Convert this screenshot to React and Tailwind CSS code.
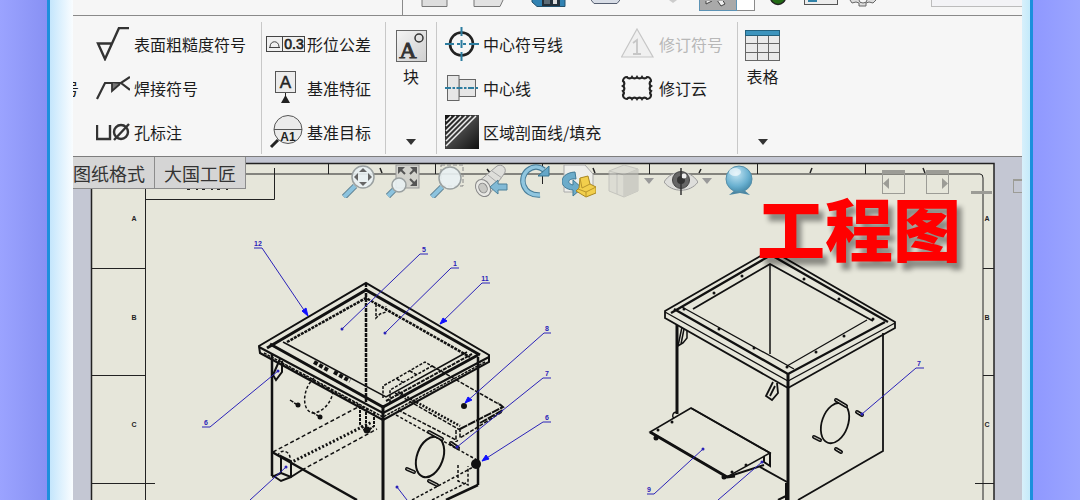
import clsx from "clsx";

const INK = "#111111";
const BALLOON = "#2a22b8";

/* ---------- ribbon icons ---------- */

const RoughnessIcon = () => (
  <svg width="34" height="34" viewBox="0 0 34 34" fill="none" stroke="#333" strokeWidth="2.4">
    <path d="M33 1H23L9 32L2 16.500H16" />
  </svg>
);

const WeldIcon = () => (
  <svg width="34" height="34" viewBox="0 0 34 34" fill="none" stroke="#333" strokeWidth="2.2">
    <path d="M1 28L9 12H25L34 6M25 12L34 19" />
    <path d="M16 12V20L24 13" fill="#777" strokeWidth="1.800" />
  </svg>
);

const HoleIcon = () => (
  <svg width="34" height="34" viewBox="0 0 34 34" fill="none" stroke="#333" strokeWidth="2.400">
    <path d="M1 10V24H14V10" />
    <circle cx="25" cy="17" r="7" />
    <path d="M18 25L33 9" />
  </svg>
);

const ToleranceIcon = () => (
  <svg width="39" height="34" viewBox="0 0 39 34" fill="none" stroke="#444">
    <rect x="0.500" y="9.500" width="38" height="15" fill="#f0f0f0" />
    <path d="M16.500 9V25M3 20.500H14M4 20C4 13 13 13 13 20" />
    <text x="28" y="22" fontSize="14" fontFamily="Liberation Sans, sans-serif" fill="#222" stroke="#222" strokeWidth="0.600" textAnchor="middle">
      0.3
    </text>
  </svg>
);

const DatumIcon = () => (
  <svg width="39" height="34" viewBox="0 0 39 34" fill="none" stroke="#555">
    <rect x="9.500" y="0.500" width="20" height="21" fill="#ececec" />
    <path d="M19.500 22V27" stroke="#222" />
    <path d="M19.500 24L24 32H15Z" fill="#222" stroke="none" />
    <text x="19.500" y="17" fontSize="17" fontFamily="Liberation Sans, sans-serif" fill="#222" stroke="#222" strokeWidth="0.500" textAnchor="middle">
      A
    </text>
  </svg>
);

const DatumTargetIcon = () => (
  <svg width="39" height="34" viewBox="0 0 39 34" fill="none" stroke="#555">
    <circle cx="22" cy="14.500" r="14" fill="#ebebeb" />
    <path d="M8 14.500H36" />
    <path d="M12 25L5 32" stroke="#222" strokeWidth="3" />
    <text x="22" y="26" fontSize="12" fontWeight="700" fontFamily="Liberation Sans, sans-serif" fill="#222" stroke="none" textAnchor="middle">
      A1
    </text>
  </svg>
);

const BlockIcon = () => (
  <svg width="31" height="32" viewBox="0 0 31 32" fill="none">
    <defs>
      <linearGradient id="block" x1="0" y1="0" x2="1" y2="1">
        <stop offset="0" stopColor="#f4f4f4" />
        <stop offset="1" stopColor="#cfcfcf" />
      </linearGradient>
    </defs>
    <rect x="0.500" y="0.500" width="30" height="31" fill="url(#block)" stroke="#666" />
    <circle cx="23" cy="8" r="4" stroke="#333" strokeWidth="1.500" />
    <text x="12" y="28" fontSize="24" fontFamily="Liberation Serif, serif" fill="#333" stroke="#333" textAnchor="middle">
      A
    </text>
  </svg>
);

const CenterMarkIcon = () => (
  <svg width="34" height="34" viewBox="0 0 34 34" fill="none">
    <circle cx="16.500" cy="17" r="11.500" stroke="#222" strokeWidth="2.600" />
    <path d="M0 17H9M12 17H15M18 17H21M24 17H34M16.500 0V9M16.500 13V21M16.500 25V34" stroke="#2d7da0" strokeWidth="2" />
  </svg>
);

const CenterlineIcon = () => (
  <svg width="34" height="34" viewBox="0 0 34 34" fill="#e6e6e6" stroke="#666">
    <rect x="14" y="8.500" width="16.500" height="17" />
    <rect x="2.500" y="4.500" width="11.500" height="25" />
    <path d="M0 17H34" stroke="#2d7da0" strokeWidth="2.200" strokeDasharray="6 1.500 2.500 1.500" />
  </svg>
);

const HatchIcon = () => (
  <svg width="34" height="34" viewBox="0 0 34 34" fill="none">
    <defs>
      <linearGradient id="hatch" x1="0" y1="0" x2="1" y2="1">
        <stop offset="0" stopColor="#111" />
        <stop offset="0.500" stopColor="#444" />
        <stop offset="1" stopColor="#111" />
      </linearGradient>
    </defs>
    <rect width="34" height="34" fill="url(#hatch)" />
    <path d="M1 6L6 1M1 11L11 1M1 16L16 1M1 21L21 1M1 26L26 1M1 31L31 1" stroke="#eee" strokeWidth="1.500" />
  </svg>
);

const RevisionIcon = () => (
  <svg width="34" height="34" viewBox="0 0 34 34" fill="#f0f0f0" stroke="#c6c6c6" strokeWidth="1.200">
    <path d="M16 2L32 30H0.500Z" />
    <path d="M12 16L16 13V27M12 27H20" fill="none" strokeWidth="1.800" />
  </svg>
);

const CloudIcon = () => (
  <svg width="34" height="34" viewBox="0 0 34 34" fill="none" stroke="#222" strokeWidth="2.200">
    <path d="M2 10A4 4 0 0 1 6 6A3 3 0 0 0 11 6A3 3 0 0 0 16 6A3 3 0 0 0 21 6A3 3 0 0 0 26 6A4 4 0 0 1 30 10A3 3 0 0 0 30 15A3 3 0 0 0 30 20A3 3 0 0 0 30 24A4 4 0 0 1 26 28A3 3 0 0 0 21 28A3 3 0 0 0 16 28A3 3 0 0 0 11 28A3 3 0 0 0 6 28A4 4 0 0 1 2 24A3 3 0 0 0 2 20A3 3 0 0 0 2 15A3 3 0 0 0 2 10Z" />
  </svg>
);

const TableIcon = () => (
  <svg width="35" height="32" viewBox="0 0 35 32" fill="#eaeaea" stroke="#666">
    <rect x="0.500" y="0.500" width="34" height="30" />
    <path d="M0 13.500H35M0 22.500H35M12.500 5V31M23.500 5V31" />
    <rect x="0.500" y="0.500" width="34" height="5" fill="#3d94bd" stroke="#24617d" />
  </svg>
);

const Caret = ({ className }) => (
  <svg width="10" height="6" viewBox="0 0 10 6" fill="currentColor" className={className}>
    <path d="M0 0H10L5 6Z" />
  </svg>
);

/* ---------- title strip ---------- */

function TitleStrip() {
  return (
    <div className="flex h-4 items-start overflow-hidden border-b border-[#8a8a8a]">
      <div className="h-full w-[330px] shrink-0 border-r border-[#8a8a8a]" />
      <div className="ml-[18px] flex items-start gap-[25px]">
        <button aria-label="新建">
          <svg width="27" height="8" viewBox="0 0 27 8">
            <path d="M1 -2V6.500H26V-2" fill="#ddd" stroke="#777" />
          </svg>
        </button>
        <button aria-label="打开">
          <svg width="31" height="8" viewBox="0 0 31 8">
            <path d="M1 -2V6.500H27L31 -2" fill="#e2e2e2" stroke="#777" />
          </svg>
        </button>
        <button aria-label="保存">
          <svg width="37" height="8" viewBox="0 0 37 8">
            <path d="M3 -1V2L8 6.500H36V-1Z" fill="#3182b2" stroke="#24526e" />
            <rect x="13" y="0" width="18" height="6" fill="#24303a" />
            <rect x="15" y="0" width="6" height="4" fill="#5d6b75" />
            <rect x="24" y="0" width="4" height="4" fill="#ddd" />
          </svg>
        </button>
        <button aria-label="打印">
          <svg width="29" height="5" viewBox="0 0 29 5">
            <path d="M0 0L3 3.500H26L29 0" fill="#d8dde6" stroke="#555e70" />
          </svg>
        </button>
      </div>
      <button aria-label="撤销" className="ml-[45px]">
        <svg width="16" height="4" viewBox="0 0 16 4">
          <path d="M4 0H12L8 3Z" fill="#ccc" />
        </svg>
      </button>
      <button aria-label="选择" className="ml-[18px] h-[11px] w-[38px] border-x border-b border-[#5d93b5] bg-[#a9a9a9]">
        <svg width="36" height="9" viewBox="0 0 36 9" fill="#eee" stroke="#444">
          <path d="M6 -2V3L12 0M17 -1L21 5L25 3L22 -2" />
        </svg>
      </button>
      <button aria-label="选择选项" className="h-[11px] w-[18px] border-r border-b border-[#8a8a8a] bg-white" />
      <button aria-label="重建模型" className="ml-[14px]">
        <svg width="18" height="6" viewBox="0 0 18 6">
          <circle cx="9" cy="-3" r="7.500" fill="#236b16" stroke="#222" strokeWidth="1.500" />
        </svg>
      </button>
      <button aria-label="文件属性" className="ml-[17px]">
        <svg width="34" height="6" viewBox="0 0 34 6">
          <rect x="0.500" y="-3" width="33" height="7.500" fill="#ececec" stroke="#555" />
          <rect x="4" y="-3" width="9" height="5" fill="#3182a8" />
        </svg>
      </button>
      <button aria-label="选项" className="ml-[11px]">
        <svg width="28" height="8" viewBox="0 0 28 8">
          <path d="M1 0L3 3L7 2L10 3V6H17V3L20 2L24 3L27 0" fill="#ddd" stroke="#666" />
          <path d="M10 0A4 3 0 0 0 18 0" fill="#f6f6f6" stroke="#666" />
        </svg>
      </button>
      <input aria-label="搜索命令" className="ml-[54px] h-[7px] min-w-0 flex-1 border-b border-l border-[#bcbcbc] bg-[#f3f3f6] outline-none" />
    </div>
  );
}

/* ---------- ribbon ---------- */

function Command({ icon, label, disabled, wide }) {
  return (
    <button
      disabled={disabled}
      className={clsx(
        "flex h-11 items-center text-left text-[16px] leading-6 whitespace-nowrap",
        wide ? "gap-[2px]" : "gap-1",
        disabled ? "text-[#b8b8b8]" : "text-[#1c1c1c]"
      )}
    >
      {icon}
      <span>{label}</span>
    </button>
  );
}

function BigCommand({ icon, label }) {
  return (
    <button className="flex h-33 flex-col items-center pt-2 text-[16px] leading-6 text-[#1c1c1c]">
      {icon}
      <span className="mt-[2px]">{label}</span>
      <Caret className="mt-auto mb-[9px] text-[#333]" />
    </button>
  );
}

function Ribbon() {
  return (
    <div className="flex border-b border-[#7d7d7d] pt-[6px] pb-[2px]">
      <div className="flex w-[189px] shrink-0 border-r border-[#c8c8c8]">
        <div className="flex w-[6px] items-center justify-end overflow-hidden text-[16px] leading-6 text-[#1c1c1c]">
          <span>号</span>
        </div>
        <div className="ml-[17px]">
          <Command icon={<RoughnessIcon />} label="表面粗糙度符号" />
          <Command icon={<WeldIcon />} label="焊接符号" />
          <Command icon={<HoleIcon />} label="孔标注" />
        </div>
      </div>
      <div className="w-[124px] shrink-0 border-r border-[#c8c8c8] pl-1">
        <Command wide icon={<ToleranceIcon />} label="形位公差" />
        <Command wide icon={<DatumIcon />} label="基准特征" />
        <Command wide icon={<DatumTargetIcon />} label="基准目标" />
      </div>
      <div className="flex w-[51px] shrink-0 justify-center border-r border-[#c8c8c8]">
        <BigCommand icon={<BlockIcon />} label="块" />
      </div>
      <div className="grid w-[301px] shrink-0 grid-cols-[176px_1fr] content-start border-r border-[#c8c8c8] pl-2">
        <Command icon={<CenterMarkIcon />} label="中心符号线" />
        <Command icon={<RevisionIcon />} label="修订符号" disabled />
        <Command icon={<CenterlineIcon />} label="中心线" />
        <Command icon={<CloudIcon />} label="修订云" />
        <Command icon={<HatchIcon />} label="区域剖面线/填充" />
      </div>
      <div className="pl-[7px]">
        <BigCommand icon={<TableIcon />} label="表格" />
      </div>
    </div>
  );
}

/* ---------- heads-up view toolbar ---------- */

const Lens = ({ cx, cy, r, tail }) => (
  <>
    <path d={tail} stroke="#5d7f90" strokeWidth="6" />
    <path d={tail} stroke="#8cc3de" strokeWidth="4" />
    <circle cx={cx} cy={cy} r={r} fill="#e9f1f3" fillOpacity="0.9" stroke="#9aa0a0" strokeWidth="1.500" />
  </>
);

const viewTools = [
  {
    label: "平移缩放",
    art: (
      <>
        <Lens cx={21} cy={13} r={11} tail="M13 22L2 33" />
        <path d="M21 4L25 8H17ZM21 22L25 18H17ZM12 13L16 9V17ZM30 13L26 9V17Z" fill="#666" />
      </>
    ),
  },
  {
    label: "整屏显示全图",
    art: (
      <>
        <rect x="10" y="1" width="23" height="23" fill="#d2d2cc" stroke="#999" />
        <path d="M12 3H19L12 10ZM31 3V10L24 3ZM31 22V15L24 22Z" fill="#555" />
        <path d="M15 6L19 10M28 6L24 10M28 19L24 15" stroke="#555" strokeWidth="2" />
        <Lens cx={13} cy={21} r={7} tail="M9 25L2 32" />
      </>
    ),
  },
  {
    label: "局部放大",
    art: (
      <>
        <rect x="11" y="1" width="22" height="21" stroke="#888" strokeDasharray="4 2" />
        <Lens cx={20} cy={14} r={11} tail="M12 23L2 33" />
      </>
    ),
  },
  {
    label: "上一视图",
    art: (
      <>
        <path d="M4 18L23 2C28 -1 34 5 30 10L14 32Z" fill="#dededa" stroke="#999" />
        <path d="M18 7L28 14M14 11L24 19" stroke="#aaa" />
        <ellipse cx="9" cy="24" rx="7" ry="9" transform="rotate(-30 9 24)" fill="#e8e8e4" stroke="#888" />
        <ellipse cx="9" cy="24" rx="4" ry="5" transform="rotate(-30 9 24)" fill="#c8c8c4" stroke="#888" />
        <path d="M16 23L24 16V20H33V26H24V30Z" fill="#82bad6" stroke="#4d8099" />
      </>
    ),
  },
  {
    label: "旋转视图",
    art: (
      <>
        <path d="M22 31C5 32 0 14 10 6C15 2 21 2 26 6" stroke="#477c98" strokeWidth="5.500" />
        <path d="M22 31C5 32 0 14 10 6C15 2 21 2 26 6" stroke="#90c6df" strokeWidth="3.500" />
        <path d="M31 2V12H20Z" fill="#65a7c8" stroke="#397590" />
      </>
    ),
  },
  {
    label: "3D 工程图视图",
    art: (
      <>
        <path d="M2 1H23L31 10V28H2Z" fill="#eeeeea" stroke="#aaa" />
        <path d="M13 8C-4 9 -4 25 11 26V32L20 24L11 16V21C5 20 5 14 14 15Z" fill="#6cacca" stroke="#417a96" />
        <path d="M18 14L26 12L28 20L34 23V29L24 33L14 27L17 24Z" fill="#f2cf4c" stroke="#a98721" />
        <path d="M18 14L20 24L28 20M16 25L24 28L34 23M24 28V33" stroke="#b8952b" />
      </>
    ),
  },
  {
    label: "显示样式",
    caret: true,
    art: (
      <g opacity="0.600">
        <path d="M3 7L18 1L32 5V27L18 33L3 27Z" fill="#d6d6d0" stroke="#b0b0ac" />
        <path d="M3 7L18 11L32 5M18 11V33M11 9V30" stroke="#b0b0ac" />
        <path d="M18 11L32 5V27L18 33Z" fill="#bdbdb8" />
      </g>
    ),
  },
  {
    label: "隐藏/显示项目",
    caret: true,
    art: (
      <>
        <path d="M0 18C8 5 26 5 34 18C26 29 8 29 0 18Z" fill="#dededb" stroke="#999" />
        <circle cx="17" cy="16" r="8.500" fill="#666" stroke="#444" />
        <circle cx="17" cy="16" r="4" fill="#333" />
        <circle cx="20" cy="12" r="2.500" fill="#eee" />
        <path d="M17 4V31" stroke="#333" strokeWidth="1.500" />
      </>
    ),
  },
  {
    label: "应用布景",
    art: (
      <>
        <path d="M7 31L13 26H22L28 31L18 29Z" fill="#4c87a3" />
        <circle cx="17" cy="15" r="13" fill="url(#ball)" stroke="#568fa9" />
        <ellipse cx="13" cy="8" rx="6" ry="4" fill="#fff" opacity="0.600" />
      </>
    ),
  },
];

function ViewToolbar() {
  return (
    <div className="absolute top-[7px] left-[269px] flex items-center gap-[10px]">
      {viewTools.map(({ label, art, caret }) => (
        <button key={label} aria-label={label} className="flex items-center gap-1">
          <svg width="34" height="34" viewBox="0 0 34 34" fill="none">
            {art}
          </svg>
          {caret && <Caret className="text-[#999]" />}
        </button>
      ))}
    </div>
  );
}

function WindowButtons() {
  return (
    <div className="absolute top-[13px] right-0 flex items-start overflow-hidden text-[#9c9c96]">
      <button aria-label="上一窗格" className="h-6 w-[23px] border border-t-4 border-current">
        <svg width="7" height="12" viewBox="0 0 7 12" fill="currentColor">
          <path d="M6 0V11L0 5.500Z" />
        </svg>
      </button>
      <button aria-label="下一窗格" className="ml-[21px] flex h-6 w-[23px] items-center justify-end border border-t-4 border-current">
        <svg width="7" height="12" viewBox="0 0 7 12" fill="currentColor">
          <path d="M1 0V11L7 5.500Z" />
        </svg>
      </button>
      <button aria-label="最小化" className="mt-[21px] ml-[22px] h-[3px] w-[21px] bg-current" />
      <button aria-label="还原" className="mt-[9px] ml-[21px] h-[14px] w-[9px] border border-t-2 border-r-0 border-current" />
    </div>
  );
}

/* ---------- drawing sheet ---------- */

// pts: leader line, arrow / dot: how it ends on the part
const balloons = [
  { n: "12", x: 258, y: 246, pts: "254,248 262,248 308,316", arrow: "308,316 302,311 306,308" },
  { n: "5", x: 424, y: 252, pts: "428,254 420,254 342,329", dot: [342, 329] },
  { n: "1", x: 455, y: 266, pts: "459,268 451,268 385,333", dot: [385, 333] },
  { n: "11", x: 485, y: 281, pts: "490,283 482,283 440,324", arrow: "440,324 443,318 447,321" },
  { n: "8", x: 547, y: 331, pts: "551,333 544,333 465,403", arrow: "465,403 468,397 472,400" },
  { n: "7", x: 547, y: 376, pts: "551,378 543,378 457,447", dot: [457, 447] },
  { n: "6", x: 547, y: 420, pts: "551,422 543,422 482,461", arrow: "482,461 486,455 489,459" },
  { n: "6", x: 206, y: 425, pts: "202,427 210,427 278,371", dot: [278, 371] },
  { n: "7", x: 919, y: 366, pts: "924,368 916,368 862,414", dot: [862, 414] },
  { n: "9", x: 649, y: 492, pts: "647,494 654,494 703,449", dot: [703, 449] },
  { pts: "250,500 286,467", dot: [286, 467] },
  { pts: "407,500 397,487", dot: [397, 487] },
  { pts: "718,500 762,462", dot: [762, 462] },
];

const rivets = [
  [742, 276], [714, 293], [684, 309], [719, 329], [754, 348], [787, 367],
  [816, 352], [844, 336], [873, 319], [839, 299], [804, 279],
];

const bolts = [
  "M407 469L414 472", "M429 481L437 485", "M429 432L442 439", "M451 443L458 448",
  "M836 400L846 406", "M814 437L820 440", "M836 449L841 452", "M857 412L862 415",
];

const rows = [
  ["A", 221],
  ["B", 320],
  ["C", 427],
];

function SheetFrame() {
  return (
    <g stroke="#222" fill="none">
      <rect x="91.500" y="163.500" width="902.500" height="400" fill="#e6e6da" strokeWidth="1.500" />
      <path d="M145.500 500V174H980Q983 174 983 178V500" />
      <path d="M145.500 199.500H274.500V168" />
      <path d="M328.500 164V174M435.500 164V174M542.500 164V184M649.500 164V174M757.500 164V174M865.500 164V174" />
      <path d="M92 268.500H145M92 375.500H145M92 483.500H155M983 268.500H994M983 375.500H994M975 483.500H994" />
      <path d="M187 189.500H232" strokeDasharray="3 6 2 4" />
      <g stroke="none" fill="#222" fontSize="7" fontWeight="700" fontFamily="Liberation Sans, sans-serif" textAnchor="middle">
        {rows.map(([letter, y]) => (
          <g key={letter}>
            <text x="134" y={y}>{letter}</text>
            <text x="987" y={y}>{letter}</text>
          </g>
        ))}
      </g>
      <path d="M380 168L382 173M487 169L490 173M593 168L595 173M701 169L699 173M810 173L812 168M923 168L925 173" strokeWidth="1.500" />
    </g>
  );
}

function AssemblyLeft() {
  return (
    <g stroke={INK} fill="none" strokeWidth="1.500">
      {/* rim */}
      <path d="M259 346L366 283L489 355V362L383 420L260 353Z" strokeWidth="2" />
      <path d="M267 348L366 290L480 355" strokeWidth="3" />
      <path d="M287 342L366 298L470 357" strokeWidth="2.500" strokeDasharray="3 1" />
      <path d="M283 342L386 397L467 352" />
      <path d="M270 344L383 407L478 355" strokeWidth="3" />
      <path d="M259 347L383 413L489 357" strokeWidth="2" />
      <path d="M264 353L383 417L485 362" strokeDasharray="3 1" />
      <path d="M386 401L472 354" strokeWidth="2" strokeDasharray="4 1" />
      <path d="M282 364L370 411" strokeDasharray="3 2" />
      <path d="M314 362L328 370M334 372L350 381" strokeWidth="4" strokeDasharray="4 2" />

      {/* body */}
      <path d="M366 283V402" strokeWidth="2.500" strokeDasharray="4 1" />
      <path d="M383 405V500" strokeWidth="3" />
      <path d="M272 354V476M478 357V485" strokeWidth="2.500" />
      <path d="M272 452L357 500M478 485L446 500" strokeWidth="2.500" />
      <path d="M272 475L281 481L291 477V461L281 456V473L272 477M281 473L291 477M291 477L302 470" strokeWidth="2" />
      <path d="M278 456C280 448 290 451 290 458" strokeDasharray="3 2" />

      {/* hidden beam */}
      <path d="M273 452L360 406M302 470L377 429" strokeDasharray="4 2.500" />
      <path d="M290 463L372 422" strokeWidth="3" strokeDasharray="2 2" />
      <path d="M360 406V424L366 432L374 426V412M366 412V430" strokeWidth="2" strokeDasharray="3 1" />

      {/* brackets */}
      <path d="M280 359L273 375L276 380L282 372V361" strokeWidth="2" />
      <path d="M376 304V318L380 314L386 312V306" strokeDasharray="3 1.500" />

      {/* shelf */}
      <path d="M383 398V386L425 362L432 366L390 390V402M397 379L404 383M410 371L417 375" strokeDasharray="3 1.500" />
      <path d="M432 366L502 406M395 393L460 430M398 410L458 441M460 428V438L502 412M456 430V442" strokeDasharray="4 1.500" />
      <path d="M460 429L503 407L498 403M480 423L503 410" strokeWidth="2" strokeDasharray="8 1" />
      <path d="M396 415L477 460M412 500L477 465M432 500L468 482M458 465V481L468 485V466" strokeDasharray="3 2" />
      <path d="M398 392L460 426" strokeWidth="2.500" strokeDasharray="2 1.500" />

      {/* ports */}
      <path d="M314 378C301 390 302 413 314 413C325 411 333 400 333 389" strokeDasharray="3 2" />
      <path d="M290 400L299 406M312 412L320 417" strokeDasharray="4 1" />
      <ellipse cx="430" cy="457" rx="13" ry="21" transform="rotate(20 430 457)" strokeWidth="2" />
      <g fill={INK} stroke="none">
        <circle cx="298" cy="405" r="2.500" />
        <circle cx="320" cy="417" r="2.500" />
        <circle cx="464" cy="406" r="3" />
        <circle cx="476" cy="464" r="5" />
        <circle cx="367" cy="430" r="3.500" />
      </g>
    </g>
  );
}

function AssemblyRight() {
  return (
    <g stroke={INK} fill="none" strokeWidth="1.300">
      {/* rim */}
      <path d="M665 311L771 250L895 322V328L788 388L665 318Z" strokeWidth="1.800" />
      <path d="M671 313L771 255L888 322" strokeWidth="2.300" />
      <path d="M693 309L770 264L873 321" strokeWidth="1.800" />
      <path d="M682 307L794 369M867 320L787 366" />
      <path d="M674 309L788 374L885 322" strokeWidth="2.300" />
      <path d="M665 312L788 381L895 323" />
      {rivets.map(([x, y]) => (
        <circle key={x} cx={x} cy={y} r="1.500" fill={INK} stroke="none" />
      ))}

      {/* body */}
      <path d="M770 264V354" strokeWidth="1.500" />
      <path d="M677 325V414" strokeWidth="3" />
      <path d="M788 374V500" strokeWidth="3" />
      <path d="M883 333V451L798 500" strokeWidth="1.800" />
      <path d="M682 327L678 346L683 343L687 338V330M681 344L684 329" strokeWidth="1.500" />
      <path d="M773 382L766 396L772 400L778 393L777 383M775 386L770 396" strokeWidth="1.800" />

      {/* shelf */}
      <path d="M691 408L650 432L727 477L770 453Z" fill="#e6e6da" strokeWidth="1.500" />
      <path d="M650 432L727 477L735 476" strokeWidth="3" />
      <path d="M691 408L770 453V466L764 462V456M727 477L764 465M760 467L787 482M786 483V500M778 500L786 496" strokeWidth="2" />
      <path d="M677 412C672 412 672 417 674 418" />
      <g fill={INK} stroke="none">
        <circle cx="656" cy="438" r="2.500" />
        <circle cx="724" cy="477" r="2.500" />
        <circle cx="658" cy="430" r="1.500" />
        <circle cx="672" cy="422" r="1.500" />
        <circle cx="732" cy="472" r="1.500" />
        <circle cx="746" cy="465" r="1.500" />
      </g>

      <ellipse cx="835" cy="423" rx="13" ry="21" transform="rotate(20 835 423)" strokeWidth="1.800" />
    </g>
  );
}

function Drawing() {
  return (
    <svg width="949" height="343" viewBox="73 157 949 343" className="block max-w-none">
      <defs>
        <radialGradient id="ball" cx="0.400" cy="0.300" r="0.800">
          <stop offset="0" stopColor="#c3e5f3" />
          <stop offset="0.600" stopColor="#69b0d0" />
          <stop offset="1" stopColor="#3b7f9f" />
        </radialGradient>
      </defs>
      <SheetFrame />
      <AssemblyLeft />
      <AssemblyRight />
      {bolts.map((d) => (
        <g key={d} fill="none" strokeLinecap="round">
          <path d={d} stroke={INK} strokeWidth="4" />
          <path d={d} stroke="#c9c9bf" />
        </g>
      ))}
      {balloons.map(({ n, x, y, pts, arrow, dot }) => (
        <g key={pts} fill={BALLOON}>
          <polyline points={pts} fill="none" stroke={BALLOON} />
          {arrow && <polygon points={arrow} fill="#1010ff" stroke="#1010ff" />}
          {dot && <circle cx={dot[0]} cy={dot[1]} r="1.500" />}
          {n && (
            <text x={x} y={y} fontSize="7" fontWeight="700" fontFamily="Liberation Sans, sans-serif" textAnchor="middle">
              {n}
            </text>
          )}
        </g>
      ))}
    </svg>
  );
}

function Workspace() {
  return (
    <div className="relative flex-1 overflow-hidden bg-[#c4c7d3]">
      <Drawing />
      <div className="absolute top-0 left-0 flex h-8 border-b border-[#8c8c8c] bg-[#d5d5d5] text-[18px] leading-8 text-[#333]">
        <button className="border-r border-[#8c8c8c] pr-[9px]">图纸格式</button>
        <button className="border-r border-[#8c8c8c] px-[9px]">大国工匠</button>
      </div>
      <ViewToolbar />
      <WindowButtons />
      <h1 className="absolute top-8 left-[684px] text-[68px] leading-[76px] font-black whitespace-nowrap text-[#ff0000] [text-shadow:5px_7px_5px_rgba(0,0,0,0.4)]">
        工程图
      </h1>
    </div>
  );
}

export default function App() {
  return (
    <div className="flex min-h-screen overflow-hidden font-['Noto_Sans_CJK_SC',sans-serif]">
      <div className="w-[47px] shrink-0 bg-linear-to-r from-[#9ba3ff] to-[#8891f4]" />
      <div className="w-[26px] shrink-0 border-l-[3px] border-[#1f8fdc] bg-linear-to-r from-[#c4e6fc] to-[#fafdff]" />
      <main className="flex min-w-0 flex-1 flex-col bg-[#f6f6f6]">
        <TitleStrip />
        <Ribbon />
        <Workspace />
      </main>
      <div className="w-[11px] shrink-0 border-r-[3px] border-[#1a90dd] bg-linear-to-r from-[#d8f0fb] to-[#c4eafa]" />
      <div className="w-[47px] shrink-0 bg-linear-to-r from-[#8f98ff] to-[#9ba5ff]" />
    </div>
  );
}
